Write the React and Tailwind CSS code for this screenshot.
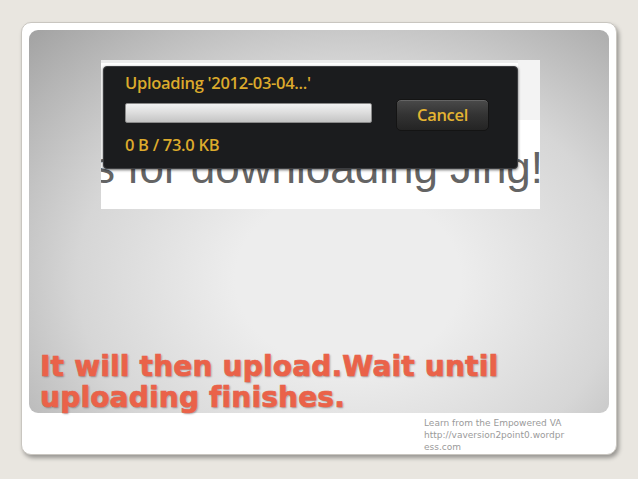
import React from 'react';

function UploadDialog() {
    return (
        <div className="relative z-10 ml-[2px] mt-[3px] w-[415px] h-[103px] rounded-[4px] border border-[#3c3d40] bg-[#1b1c1e] px-[21px] pt-[4px] shadow-[0_1px_3px_rgba(0,0,0,0.6)] font-['Open_Sans',sans-serif] text-[#dcaa2c]">
            <div className="h-[24px] leading-[24px] text-[16.5px] font-semibold tracking-[-0.3px]">Uploading '2012-03-04...'</div>
            <div className="mt-[4px] flex items-center">
                <div className="-mt-[4px] w-[247px] h-[20px] rounded-[2px] border border-[#8a8a8a] bg-gradient-to-b from-[#f2f2f2] via-[#dcdcdc] to-[#c4c4c4]" />
                <button className="ml-[24px] w-[93px] h-[32px] rounded-[5px] border border-[#141414] bg-gradient-to-b from-[#4a4a4a] via-[#333333] to-[#242424] text-[16.5px] font-semibold tracking-[-0.3px] text-[#e4b432] shadow-[inset_0_1px_0_rgba(255,255,255,0.15)]">
                    Cancel
                </button>
            </div>
            <div className="mt-[2px] h-[24px] leading-[24px] text-[16.5px] font-semibold tracking-[-0.3px]">0 B / 73.0 KB</div>
        </div>
    );
}

export default function App() {
    return (
        <div className="w-[638px] h-[479px] overflow-hidden bg-[#e9e6e0] pt-[22px] pl-[21px]">
            {/* Slide card */}
            <div className="w-[596px] h-[433px] rounded-[10px] border border-[#c9c6c0] bg-white p-[7px] shadow-[2px_3px_4px_rgba(0,0,0,0.35)]">
                {/* Gray panel */}
                <div className="flex flex-col h-[383px] rounded-[9px] bg-[radial-gradient(ellipse_at_55%_65%,#ededed_25%,#d6d6d6_60%,#a2a2a2_100%)]">
                    {/* Screenshot */}
                    <div className="ml-[72px] mt-[30px] w-[439px] h-[152px] overflow-hidden bg-white">
                        <div className="h-[3px] bg-[#ececec]" />
                        <div className="flex">
                            <UploadDialog />
                            <div className="flex-1 bg-[#f3f3f3] h-[60px] mt-[-3px]" />
                        </div>
                        <div className="-mt-[25px] -ml-[8px] whitespace-nowrap font-['Liberation_Sans',Arial,sans-serif] text-[44px] leading-[48px] text-[#646464]">
                            s for downloading Jing!
                        </div>
                    </div>
                    {/* Title */}
                    <div className="mt-[142px] ml-[11px] font-['DejaVu_Sans',Verdana,sans-serif] font-bold text-[28px] leading-[31px] tracking-[0.2px] text-[#ea6249] [-webkit-text-stroke:0.7px_#ea6249] [text-shadow:1px_1px_2px_rgba(0,0,0,0.35)]">
                        <div>It will then upload.Wait until</div>
                        <div>uploading finishes.</div>
                    </div>
                </div>
                {/* Footer */}
                <div className="ml-[395px] mt-[4px] font-['DejaVu_Sans',sans-serif] text-[9px] leading-[12px] text-[#9a9a9a]">
                    <div>Learn from the Empowered VA</div>
                    <div>http://vaversion2point0.wordpr</div>
                    <div>ess.com</div>
                </div>
            </div>
        </div>
    );
}
